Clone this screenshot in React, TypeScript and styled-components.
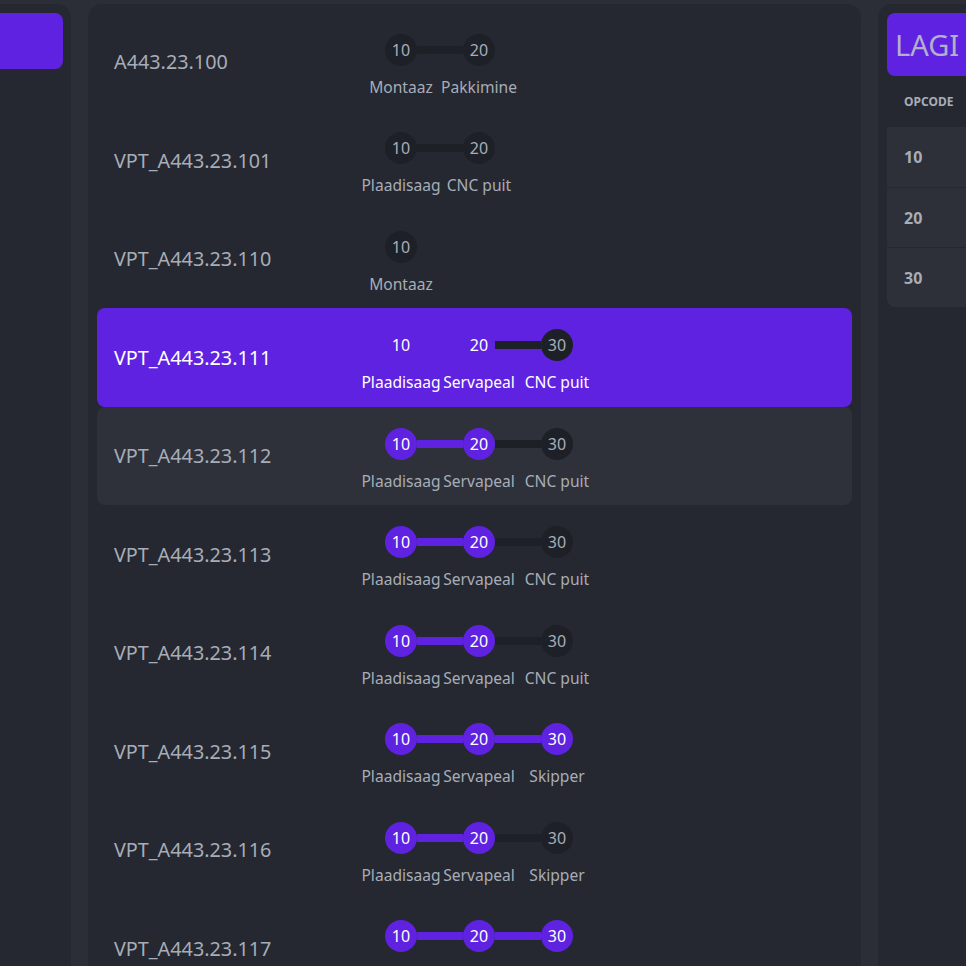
import styled, { createGlobalStyle } from 'styled-components';

const PURPLE = '#5f22e0';
const PAGE_BG = '#2b2e37';
const PANEL_BG = '#252830';
const DARK = '#1e2027';
const TEXT = '#a7adb8';

type Step = { code: number; label: string; done: boolean };
type Item = { name: string; steps: Step[]; selected?: boolean; hovered?: boolean };

const makeSteps = (labels: string[], done: number): Step[] =>
  labels.map((label, i) => ({ code: (i + 1) * 10, label, done: i < done }));

const CNC = ['Plaadisaag', 'Servapeal', 'CNC puit'];
const SKIPPER = ['Plaadisaag', 'Servapeal', 'Skipper'];

const items: Item[] = [
  { name: 'A443.23.100', steps: makeSteps(['Montaaz', 'Pakkimine'], 0) },
  { name: 'VPT_A443.23.101', steps: makeSteps(['Plaadisaag', 'CNC puit'], 0) },
  { name: 'VPT_A443.23.110', steps: makeSteps(['Montaaz'], 0) },
  { name: 'VPT_A443.23.111', steps: makeSteps(CNC, 2), selected: true },
  { name: 'VPT_A443.23.112', steps: makeSteps(CNC, 2), hovered: true },
  { name: 'VPT_A443.23.113', steps: makeSteps(CNC, 2) },
  { name: 'VPT_A443.23.114', steps: makeSteps(CNC, 2) },
  { name: 'VPT_A443.23.115', steps: makeSteps(SKIPPER, 3) },
  { name: 'VPT_A443.23.116', steps: makeSteps(SKIPPER, 2) },
  { name: 'VPT_A443.23.117', steps: makeSteps(SKIPPER, 3) },
];

const opcodes = [10, 20, 30];

export default function App() {
  return (
    <>
      <GlobalStyle />
      <Page>
        <SidePanel>
          <SideButton />
        </SidePanel>
        <ListPanel>
          {items.map((item) => (
            <Row key={item.name} $selected={item.selected} $hovered={item.hovered}>
              <Name $selected={item.selected}>{item.name}</Name>
              <Stepper>
                <Track>
                  {item.steps.map((step, i) => (
                    <TrackPart key={step.code}>
                      <Circle $done={step.done}>{step.code}</Circle>
                      {i < item.steps.length - 1 && (
                        <Line $done={item.steps[i + 1].done} />
                      )}
                    </TrackPart>
                  ))}
                </Track>
                <Labels>
                  {item.steps.map((step) => (
                    <Label key={step.code} $selected={item.selected}>
                      {step.label}
                    </Label>
                  ))}
                </Labels>
              </Stepper>
            </Row>
          ))}
        </ListPanel>
        <DetailPanel>
          <DetailHeader>LAGI</DetailHeader>
          <TableHead>OPCODE</TableHead>
          <Table>
            {opcodes.map((code) => (
              <TableRow key={code}>{code}</TableRow>
            ))}
          </Table>
        </DetailPanel>
      </Page>
    </>
  );
}

const GlobalStyle = createGlobalStyle`
  html, body {
    margin: 0;
    padding: 0;
    background: ${PAGE_BG};
    overflow: hidden;
    font-family: 'Segoe UI', 'Noto Sans', sans-serif;
  }
`;

const Page = styled.div`
  display: flex;
  gap: 17px;
  height: 100vh;
  padding-top: 4px;
  margin-left: -120px;
  box-sizing: border-box;
`;

const Panel = styled.div`
  background: ${PANEL_BG};
  border-radius: 14px 14px 0 0;
  flex-shrink: 0;
  box-sizing: border-box;
  overflow: hidden;
  height: calc(100vh + 20px);
`;

const SidePanel = styled(Panel)`
  width: 191px;
  padding: 9px 8px 0 9px;
`;

const SideButton = styled.div`
  height: 56px;
  background: ${PURPLE};
  border-radius: 8px;
`;

const ListPanel = styled(Panel)`
  width: 773px;
  padding: 8.5px 9px 0;
`;

const Row = styled.div<{ $selected?: boolean; $hovered?: boolean }>`
  display: flex;
  align-items: center;
  height: 98.5px;
  padding-left: 17px;
  border-radius: 8px;
  box-sizing: border-box;
  background: ${({ $selected, $hovered }) =>
    $selected ? PURPLE : $hovered ? '#2e313a' : 'transparent'};
`;

const Name = styled.div<{ $selected?: boolean }>`
  width: 248px;
  flex-shrink: 0;
  font-size: 19.8px;
  color: ${({ $selected }) => ($selected ? '#ffffff' : TEXT)};
`;

const Stepper = styled.div`
  display: flex;
  flex-direction: column;
  gap: 10px;
  margin-top: 8px;
`;

const Track = styled.div`
  display: flex;
  align-items: center;
  padding-left: 23px;
`;

const TrackPart = styled.div`
  display: flex;
  align-items: center;
`;

const Circle = styled.div<{ $done: boolean }>`
  width: 32px;
  height: 32px;
  border-radius: 50%;
  display: flex;
  align-items: center;
  justify-content: center;
  font-size: 16px;
  background: ${({ $done }) => ($done ? PURPLE : DARK)};
  color: ${({ $done }) => ($done ? '#ffffff' : TEXT)};
`;

const Line = styled.div<{ $done: boolean }>`
  width: 46px;
  height: 8px;
  background: ${({ $done }) => ($done ? PURPLE : DARK)};
`;

const Labels = styled.div`
  display: flex;
`;

const Label = styled.div<{ $selected?: boolean }>`
  width: 78px;
  display: flex;
  justify-content: center;
  white-space: nowrap;
  font-size: 15.6px;
  line-height: 22px;
  color: ${({ $selected }) => ($selected ? '#ffffff' : TEXT)};
`;

const DetailPanel = styled(Panel)`
  width: 300px;
  padding: 9px 9px 0;
`;

const DetailHeader = styled.div`
  height: 63px;
  display: flex;
  align-items: center;
  padding-left: 8px;
  background: ${PURPLE};
  border-radius: 8px;
  font-size: 29px;
  color: #b3b0cc;
`;

const TableHead = styled.div`
  height: 51px;
  display: flex;
  align-items: center;
  padding-left: 17px;
  font-size: 12px;
  font-weight: 700;
  color: ${TEXT};
`;

const Table = styled.div`
  display: flex;
  flex-direction: column;
  background: #2e3039;
  border-radius: 0 0 8px 8px;
  overflow: hidden;
`;

const TableRow = styled.div`
  height: 60px;
  display: flex;
  align-items: center;
  padding-left: 17px;
  font-size: 16px;
  font-weight: 700;
  color: ${TEXT};
  box-sizing: border-box;

  & + & {
    border-top: 1px solid #262830;
  }
`;
